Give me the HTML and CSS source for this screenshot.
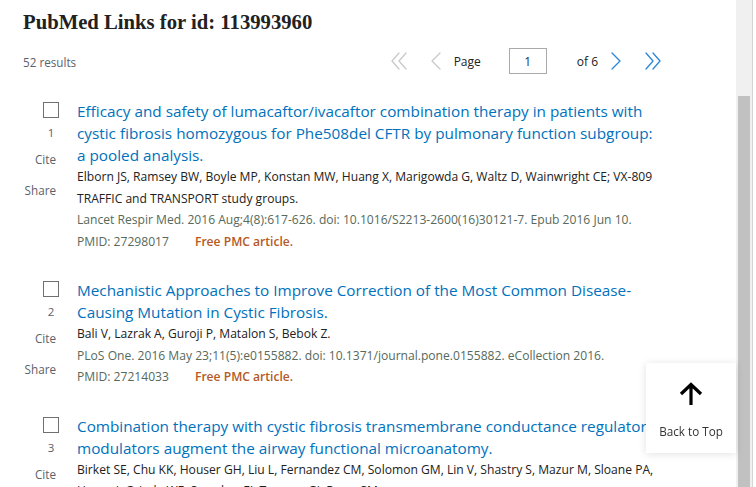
FILE: index.html
```html
<!DOCTYPE html>
<html lang="en">
<head>
<meta charset="utf-8">
<title>PubMed Links for id: 113993960</title>
<link rel="stylesheet" href="styles.css">
</head>
<body>
<div class="page">
  <main class="content">
    <h1 class="heading">PubMed Links for id: 113993960</h1>
    <div class="toolbar">
      <span class="count">52 results</span>
      <nav class="pager">
        <svg class="chev dbl off" viewBox="0 0 16 18" width="16" height="18"><path d="M8 1 L1 9 L8 17 M15 1 L8 9 L15 17"/></svg>
        <svg class="chev sgl off prev" viewBox="0 0 10 18" width="10" height="18"><path d="M9 1 L1 9 L9 17"/></svg>
        <span class="page-label">Page</span>
        <span class="page-input">1</span>
        <span class="page-of">of 6</span>
        <svg class="chev sgl on next" viewBox="0 0 10 18" width="10" height="18"><path d="M1 1 L9 9 L1 17"/></svg>
        <svg class="chev dbl on last" viewBox="0 0 16 18" width="16" height="18"><path d="M1 1 L8 9 L1 17 M8 1 L15 9 L8 17"/></svg>
      </nav>
    </div>

    <div class="results">
      <article class="docsum">
        <div class="side">
          <span class="check"></span>
          <span class="num">1</span>
          <span class="action cite">Cite</span>
          <span class="action share">Share</span>
        </div>
        <div class="body">
          <a class="title">Efficacy and safety of lumacaftor/ivacaftor combination therapy in patients with cystic fibrosis homozygous for Phe508del CFTR by pulmonary function subgroup: a pooled analysis.</a>
          <div class="authors">Elborn JS, Ramsey BW, Boyle MP, Konstan MW, Huang X, Marigowda G, Waltz D, Wainwright CE; VX-809 TRAFFIC and TRANSPORT study groups.</div>
          <div class="journal">Lancet Respir Med. 2016 Aug;4(8):617-626. doi: 10.1016/S2213-2600(16)30121-7. Epub 2016 Jun 10.</div>
          <div class="journal">PMID: 27298017<span class="free">Free PMC article.</span></div>
        </div>
      </article>

      <article class="docsum">
        <div class="side">
          <span class="check"></span>
          <span class="num">2</span>
          <span class="action cite">Cite</span>
          <span class="action share">Share</span>
        </div>
        <div class="body">
          <a class="title">Mechanistic Approaches to Improve Correction of the Most Common Disease-Causing Mutation in Cystic Fibrosis.</a>
          <div class="authors">Bali V, Lazrak A, Guroji P, Matalon S, Bebok Z.</div>
          <div class="journal">PLoS One. 2016 May 23;11(5):e0155882. doi: 10.1371/journal.pone.0155882. eCollection 2016.</div>
          <div class="journal">PMID: 27214033<span class="free">Free PMC article.</span></div>
        </div>
      </article>

      <article class="docsum">
        <div class="side">
          <span class="check"></span>
          <span class="num">3</span>
          <span class="action cite">Cite</span>
          <span class="action share">Share</span>
        </div>
        <div class="body">
          <a class="title">Combination therapy with cystic fibrosis transmembrane conductance regulator modulators augment the airway functional microanatomy.</a>
          <div class="authors">Birket SE, Chu KK, Houser GH, Liu L, Fernandez CM, Solomon GM, Lin V, Shastry S, Mazur M, Sloane PA, Hanes J, Grizzle WE, Sorscher EJ, Tearney GJ, Rowe SM.</div>
        </div>
      </article>
    </div>
  </main>
  <div class="scrollbar"><div class="thumb"></div></div>
</div>

<a class="back-top">
  <svg viewBox="0 0 26 24" width="26" height="24"><path d="M13 23 V3 M3 12 L13 2.5 L23 12"/></svg>
  <span>Back to Top</span>
</a>
</body>
</html>
```

FILE: styles.css
```css
html, body {
  margin: 0;
  padding: 0;
  background: #fff;
}

body {
  font-family: "Open Sans", "Noto Sans", sans-serif;
  color: #212121;
  overflow: hidden;
}

.page {
  display: flex;
  height: 487px;
  overflow: hidden;
}

.content {
  flex: 1;
  min-width: 0;
  padding-left: 23px;
}

.heading {
  margin: 10px 0 0;
  font-family: "Liberation Serif", "Times New Roman", serif;
  font-weight: 700;
  font-size: 20.7px;
  line-height: 24px;
  color: #212121;
}

.toolbar {
  display: flex;
  align-items: center;
  width: 638px;
  height: 26px;
  margin-top: 14px;
}

.count {
  font-size: 11.7px;
  color: #5b616b;
  margin-top: 2px;
}

.pager {
  margin-left: auto;
  display: flex;
  align-items: center;
  font-size: 12px;
  color: #212121;
}

.chev {
  fill: none;
  stroke-width: 1.3;
  stroke-linecap: round;
  stroke-linejoin: round;
}

.chev.off { stroke: #c9c9c9; }
.chev.on { stroke: #2b88d8; }

.chev.prev { margin-left: 24px; }
.page-label { margin-left: 13px; }

.page-input {
  margin-left: 28px;
  width: 36px;
  height: 24px;
  border: 1px solid #a9a9a9;
  display: flex;
  align-items: center;
  justify-content: center;
  color: #1d2f5a;
}

.page-of { margin-left: 30px; }
.chev.next { margin-left: 13px; }
.chev.last { margin-left: 24px; }

.results {
  margin-top: 26px;
}

.docsum {
  display: flex;
  gap: 18px;
  margin-bottom: 27px;
}

.side {
  width: 36px;
  flex: none;
  display: flex;
  flex-direction: column;
  align-items: flex-end;
  color: #5b616b;
}

.check {
  width: 14px;
  height: 14px;
  border: 1px solid #707070;
  margin-top: 2px;
}

.num {
  width: 16px;
  text-align: center;
  font-size: 11.5px;
  line-height: 16px;
  margin-top: 7px;
}

.action {
  font-size: 11.7px;
  line-height: 16px;
  margin-right: 3px;
}

.cite { margin-top: 10px; }
.share { margin-top: 15px; }

.body {
  width: 585px;
  flex: none;
}

.title {
  display: block;
  font-size: 15.3px;
  line-height: 22px;
  color: #0071bc;
  text-decoration: none;
}

.authors,
.journal {
  font-size: 12.1px;
  line-height: 21.5px;
}

.authors { color: #212121; }
.journal { color: #56695b; }

.free {
  margin-left: 26px;
  font-weight: 600;
  color: #b4591f;
}

.scrollbar {
  flex: none;
  width: 17px;
  margin-right: 3px;
  background: #f0f0f0;
  border-right: 1px solid #d4d4d4;
  box-sizing: border-box;
  padding: 96px 2px 0;
}

.thumb {
  height: 100%;
  background: #c1c1c1;
}

.back-top {
  position: fixed;
  left: 646px;
  top: 363px;
  width: 90px;
  height: 90px;
  background: #fff;
  box-shadow: 0 1px 8px rgba(0, 0, 0, 0.12);
  display: flex;
  flex-direction: column;
  align-items: center;
  color: #333;
  font-size: 11.7px;
  text-decoration: none;
}

.back-top svg {
  margin-top: 19px;
  fill: none;
  stroke: #000;
  stroke-width: 3.2;
  stroke-linecap: butt;
}

.back-top span {
  margin-top: 17px;
  line-height: 16px;
}
```
